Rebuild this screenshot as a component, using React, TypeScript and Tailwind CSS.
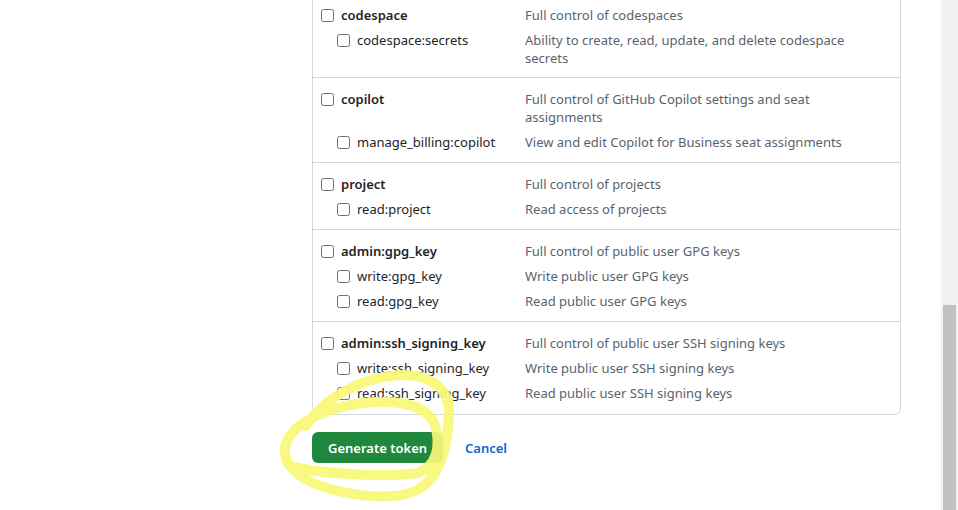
import React from "react";

type Row = { name: string; desc: string; child?: boolean };
const sections: Row[][] = [
  [
    { name: "codespace", desc: "Full control of codespaces" },
    { name: "codespace:secrets", desc: "Ability to create, read, update, and delete codespace secrets", child: true },
  ],
  [
    { name: "copilot", desc: "Full control of GitHub Copilot settings and seat assignments" },
    { name: "manage_billing:copilot", desc: "View and edit Copilot for Business seat assignments", child: true },
  ],
  [
    { name: "project", desc: "Full control of projects" },
    { name: "read:project", desc: "Read access of projects", child: true },
  ],
  [
    { name: "admin:gpg_key", desc: "Full control of public user GPG keys" },
    { name: "write:gpg_key", desc: "Write public user GPG keys", child: true },
    { name: "read:gpg_key", desc: "Read public user GPG keys", child: true },
  ],
  [
    { name: "admin:ssh_signing_key", desc: "Full control of public user SSH signing keys" },
    { name: "write:ssh_signing_key", desc: "Write public user SSH signing keys", child: true },
    { name: "read:ssh_signing_key", desc: "Read public user SSH signing keys", child: true },
  ],
];

function Checkbox() {
  return <span className="inline-block w-[13px] h-[13px] shrink-0 rounded-[2.5px] border border-[#6e6e6e] bg-white" />;
}

export default function App() {
  return (
    <div
      className="relative flex w-[958px] h-[510px] overflow-hidden bg-white text-[13px] leading-[18px]"
      style={{ fontFamily: '"Noto Sans", "Open Sans", sans-serif' }}
    >
      <div className="flex-1 pl-[312px]">
        <div className="mt-[-7px] w-[589px] rounded-b-[6px] border border-[#d0d7de] divide-y divide-[#d0d7de]">
          {sections.map((rows, i) => (
            <div
              key={i}
              className={`flex flex-col gap-[7px] pt-[12px] pl-[8px] ${i === 0 ? "pb-[10px]" : i === 4 ? "pb-[12px]" : "pb-[11px]"}`}
            >
              {rows.map((r) => (
                <div key={r.name} className="flex items-start">
                  <div className={`flex w-[204px] items-center ${r.child ? "pl-[16px]" : ""}`}>
                    <div className="flex h-[18px] items-center">
                      <Checkbox />
                    </div>
                    <span
                      className={`ml-[7px] ${r.child ? "text-[#1f2328]" : "font-semibold text-[#1f2328]"}`}
                    >
                      {r.name}
                    </span>
                  </div>
                  <div className="w-[345px] text-[#59636e]">{r.desc}</div>
                </div>
              ))}
            </div>
          ))}
        </div>
        <div className="mt-[17px] flex items-center">
          <button className="h-[31px] rounded-[6px] bg-[#1f883d] px-[16px] text-[13px] font-semibold text-white">
            Generate token
          </button>
          <a className="ml-[22px] text-[13px] font-semibold text-[#0969da]">Cancel</a>
        </div>
      </div>
      <div className="flex w-[17px] shrink-0 flex-col bg-[#f1f1f1] pt-[305px]">
        <div className="mx-[2px] flex-1 bg-[#c1c1c1]" />
      </div>
      <svg className="pointer-events-none absolute inset-0" width="958" height="510" viewBox="0 0 958 510">
        <path
          d="M 306 426 C 322 400, 360 377, 400 375 C 432 374, 450 390, 449 413 C 448 446, 441 479, 415 491 C 395 500, 360 497, 330 489 C 300 481, 283 465, 285 448 C 287 431, 310 413, 350 405 C 390 398, 426 402, 435 425 C 441 446, 437 466, 418 473 C 390 477, 330 475, 293 467"
          fill="none"
          stroke="#f9f977"
          strokeWidth="10"
          strokeLinecap="round"
          strokeLinejoin="round"
          opacity="0.92"
        />
      </svg>
    </div>
  );
}
